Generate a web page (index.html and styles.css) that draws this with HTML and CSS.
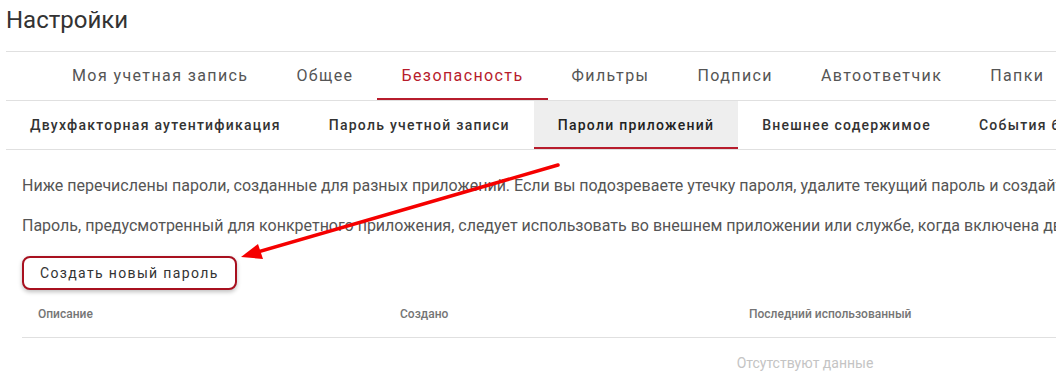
FILE: index.html
```html
<!DOCTYPE html>
<html lang="ru">
<head>
<meta charset="UTF-8">
<meta name="viewport" content="width=device-width, initial-scale=1.0">
<title>Настройки</title>
<link rel="stylesheet" href="styles.css">
</head>
<body>
<div class="page">
    <div class="head">
        <h1 class="title">Настройки</h1>
    </div>
    <ul class="tabs">
        <li>Моя учетная запись</li>
        <li>Общее</li>
        <li class="active">Безопасность</li>
        <li>Фильтры</li>
        <li>Подписи</li>
        <li>Автоответчик</li>
        <li>Папки</li>
        <li>Контакты</li>
    </ul>
    <ul class="subtabs">
        <li>Двухфакторная аутентификация</li>
        <li>Пароль учетной записи</li>
        <li class="active">Пароли приложений</li>
        <li>Внешнее содержимое</li>
        <li>События безопасности</li>
    </ul>
    <div class="content">
        <p>Ниже перечислены пароли, созданные для разных приложений. Если вы подозреваете утечку пароля, удалите текущий пароль и создайте новый.</p>
        <p>Пароль, предусмотренный для конкретного приложения, следует использовать во внешнем приложении или службе, когда включена двухфакторная аутентификация.</p>
        <button class="btn">Создать новый пароль</button>
        <table class="grid">
            <thead>
                <tr>
                    <th class="col-desc">Описание</th>
                    <th class="col-created">Создано</th>
                    <th>Последний использованный</th>
                </tr>
            </thead>
            <tbody>
                <tr>
                    <td colspan="3" class="empty">Отсутствуют данные</td>
                </tr>
            </tbody>
        </table>
    </div>
    <svg class="arrow" width="1056" height="390" viewBox="0 0 1056 390">
        <line x1="558" y1="165" x2="254" y2="253" stroke="#f50000" stroke-width="3.5" stroke-linecap="round"/>
        <polygon points="241,257 258,244 263,259" fill="#f50000"/>
    </svg>
</div>
</body>
</html>
```

FILE: styles.css
```css
html,
body {
    margin: 0;
    overflow: hidden;
}
body {
    font-family: Roboto, "Noto Sans", sans-serif;
    color: #333;
    background: #fff;
}
.page {
    position: relative;
    width: 1600px;
    padding-left: 6px;
}
.head {
    box-sizing: border-box;
    height: 52px;
    padding-top: 8px;
    border-bottom: 1px solid #e0e0e0;
}
.title {
    margin: 0;
    font: 400 24px/24px Roboto, sans-serif;
    color: #333;
}
.tabs,
.subtabs {
    display: flex;
    margin: 0;
    padding: 0;
    list-style: none;
    border-bottom: 1px solid #e0e0e0;
    white-space: nowrap;
}
.tabs {
    padding-left: 42px;
}
.tabs li,
.subtabs li {
    box-sizing: border-box;
    height: 48px;
    line-height: 48px;
    padding: 0 24px;
}
.tabs li {
    font-size: 16px;
    letter-spacing: 1.4px;
    color: #555;
}
.tabs li.active {
    color: #b71c2c;
    border-bottom: 2px solid #b71c2c;
}
.subtabs li {
    font-size: 14px;
    font-weight: 500;
    letter-spacing: 1.25px;
    color: #333;
}
.subtabs li.active {
    background: #eeeeee;
    color: #222;
    border-bottom: 2px solid #b71c2c;
}
.content {
    padding: 24px 0 0 16px;
}
.content p {
    margin: 0 0 16px;
    font-size: 16px;
    line-height: 24px;
    color: #555;
    white-space: nowrap;
}
.btn {
    display: block;
    box-sizing: border-box;
    height: 34px;
    margin-top: 18px;
    padding: 0 16px;
    border: 2px solid #a8101f;
    border-radius: 8px;
    background: #fff;
    box-shadow: 0 2px 4px rgba(0, 0, 0, 0.25);
    font: 400 14px Roboto, sans-serif;
    letter-spacing: 1.35px;
    color: #333;
}
.grid {
    width: 1566px;
    border-collapse: collapse;
}
.grid th {
    height: 47px;
    padding: 0 16px;
    text-align: left;
    font-size: 12px;
    font-weight: 500;
    color: #757575;
    border-bottom: 1px solid #e0e0e0;
}
.col-desc {
    width: 330px;
}
.col-created {
    width: 317px;
}
.empty {
    height: 48px;
    text-align: center;
    font-size: 14px;
    color: #c4c4c4;
}
.arrow {
    position: absolute;
    left: 0;
    top: 0;
    pointer-events: none;
}
```
